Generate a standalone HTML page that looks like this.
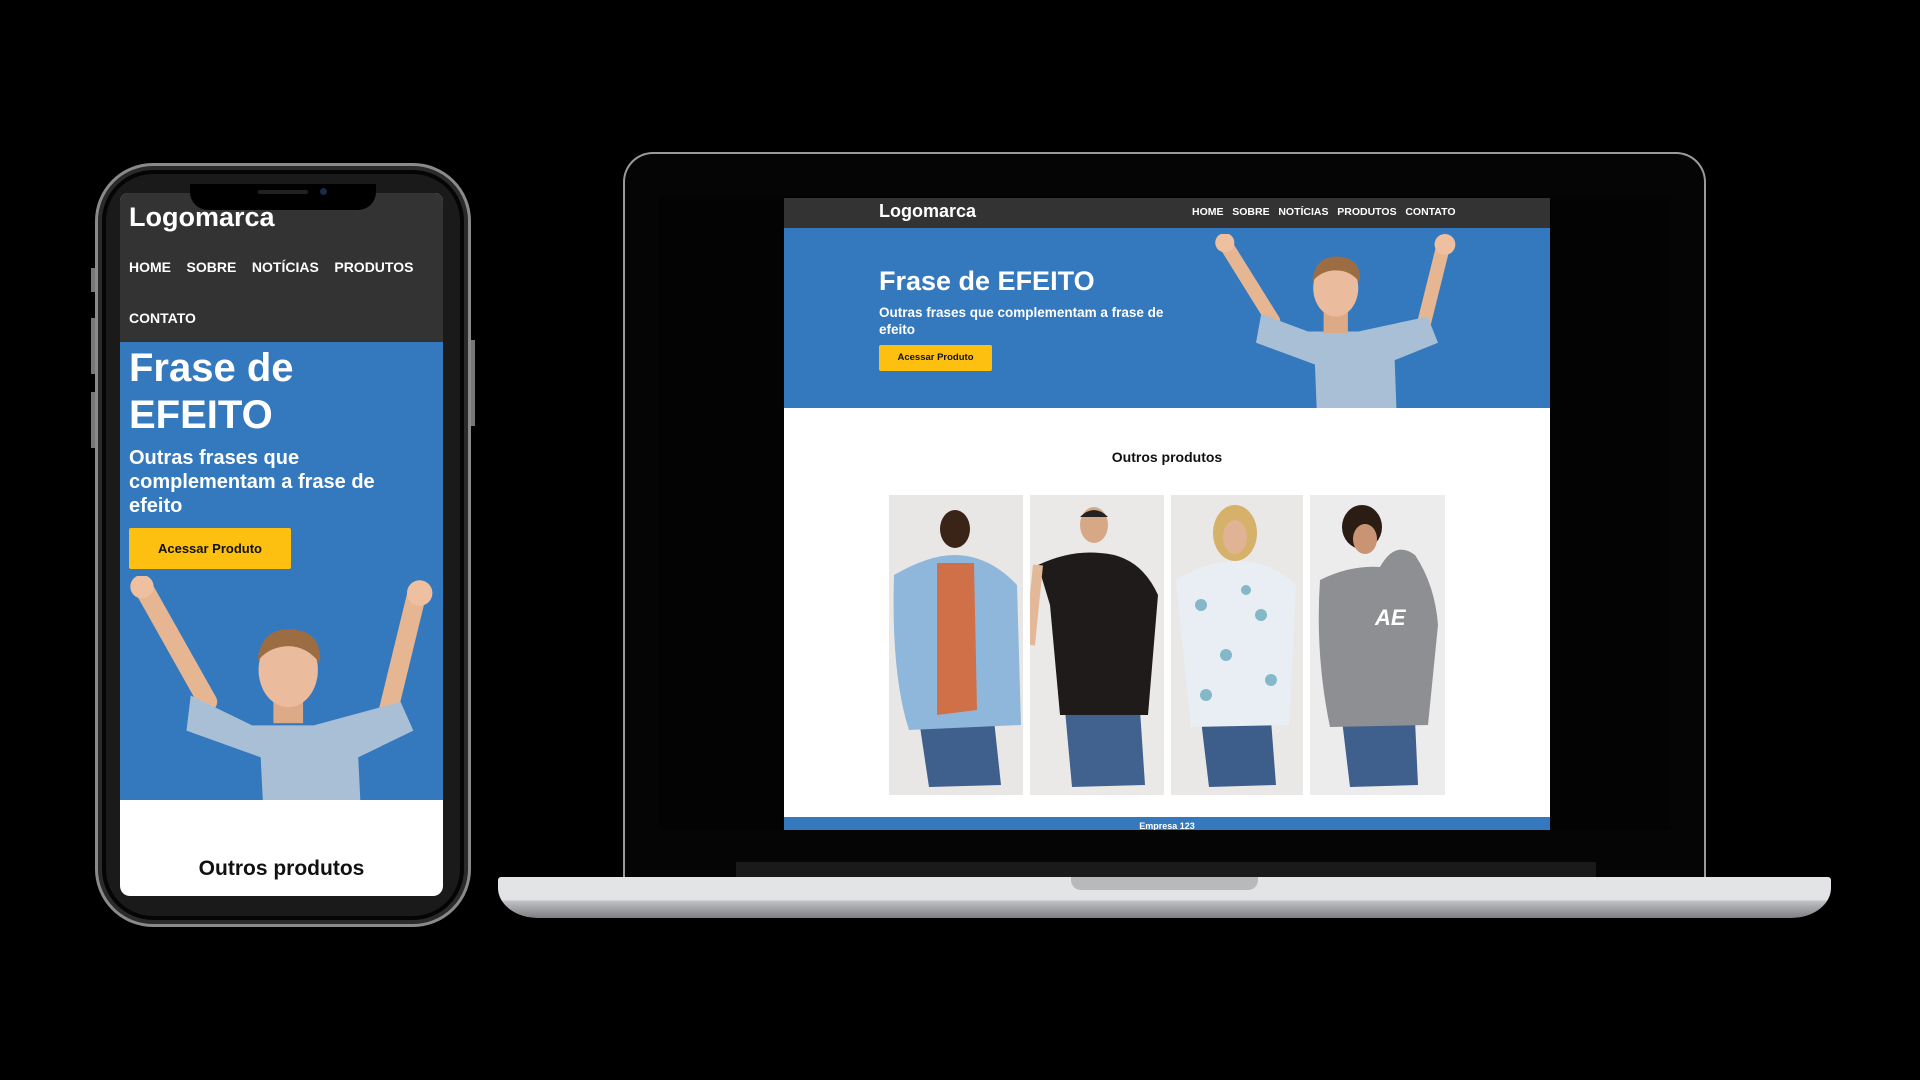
<!DOCTYPE html>
<html><head><meta charset="utf-8"><style>
*{margin:0;padding:0;box-sizing:border-box}
body{width:1920px;height:1080px;background:#000;position:relative;overflow:hidden;font-family:"Liberation Sans",Arial,sans-serif}
.abs{position:absolute}
.b{font-weight:bold}
</style></head><body>

<!-- PHONE -->
<div class="abs" style="left:95px;top:163px;width:376px;height:764px;border-radius:58px;background:#1a1a1a;border:3px solid #8a8a8a;box-shadow:inset 0 0 0 4px #2a2a2a,inset 0 0 0 8px #050505"></div>
<div class="abs" style="left:91px;top:268px;width:4px;height:24px;background:#777"></div>
<div class="abs" style="left:91px;top:318px;width:4px;height:56px;background:#777"></div>
<div class="abs" style="left:91px;top:392px;width:4px;height:56px;background:#777"></div>
<div class="abs" style="left:471px;top:340px;width:4px;height:86px;background:#777"></div>
<div class="abs" style="left:120px;top:193px;width:323px;height:703px;border-radius:8px 8px 10px 10px;overflow:hidden;background:#fff">
  <div class="abs" style="left:0;top:0;width:323px;height:149px;background:#333"></div>
  <div class="abs b" style="left:9px;top:9px;color:#fff;font-size:27px">Logomarca</div>
  <div class="abs b" style="left:9px;top:66px;color:#fff;font-size:14px;white-space:nowrap">HOME&nbsp;&nbsp;&nbsp;&nbsp;SOBRE&nbsp;&nbsp;&nbsp;&nbsp;NOTÍCIAS&nbsp;&nbsp;&nbsp;&nbsp;PRODUTOS</div>
  <div class="abs b" style="left:9px;top:117px;color:#fff;font-size:14px">CONTATO</div>
  <div class="abs" style="left:0;top:149px;width:323px;height:458px;background:#3479bd"></div>
  <div class="abs b" style="left:9px;top:152px;color:#fff;font-size:40px;line-height:47px">Frase de<br>EFEITO</div>
  <div class="abs b" style="left:9px;top:253px;color:#fff;font-size:20px;line-height:24px">Outras frases que<br>complementam a frase de<br>efeito</div>
  <div class="abs b" style="left:9px;top:335px;width:162px;height:41px;background:#fdc010;border-radius:2px;font-size:13px;color:#111;text-align:center;line-height:41px">Acessar Produto</div>
  <svg class="abs" style="left:5px;top:383px" width="318" height="224" viewBox="0 0 300 210" preserveAspectRatio="none">
    <path d="M18,12 L78,118" stroke="#e6b693" stroke-width="18" stroke-linecap="round"/>
    <path d="M275,18 L248,128" stroke="#e6b693" stroke-width="18" stroke-linecap="round"/>
    <circle cx="16" cy="10" r="11" fill="#eec0a0"/><circle cx="278" cy="16" r="12" fill="#eec0a0"/>
    <path d="M62,112 L120,140 L178,140 L260,118 L272,145 L220,170 L222,210 L130,210 L128,170 L58,145 Z" fill="#a9bfd6"/>
    <rect x="140" y="108" width="28" height="30" fill="#ddaa88"/>
    <ellipse cx="154" cy="88" rx="28" ry="35" fill="#eabb9c"/>
    <path d="M125,80 Q128,48 158,50 Q186,52 184,82 Q170,64 150,66 Q134,68 125,80Z" fill="#9c6c43"/>
  </svg>
  <div class="abs b" style="left:0;top:664px;width:323px;text-align:center;font-size:21px;color:#111">Outros produtos</div>
</div>
<div class="abs" style="left:190px;top:184px;width:186px;height:26px;background:#000;border-radius:0 0 18px 18px"></div>
<div class="abs" style="left:258px;top:190px;width:50px;height:4px;background:#222;border-radius:2px"></div>
<div class="abs" style="left:320px;top:188px;width:7px;height:7px;background:#1a2a4a;border-radius:50%"></div>

<!-- LAPTOP -->
<div class="abs" style="left:623px;top:152px;width:1083px;height:728px;border-radius:30px 30px 0 0;background:#050505;border:2px solid #9a9a9a;border-bottom:none"></div>
<div class="abs" style="left:659px;top:196px;width:1012px;height:634px;background:#030303"></div>
<div class="abs" style="left:784px;top:198px;width:766px;height:632px;background:#fff;overflow:hidden">
  <div class="abs" style="left:0;top:0;width:766px;height:30px;background:#333"></div>
  <div class="abs b" style="left:95px;top:3px;color:#fff;font-size:18px">Logomarca</div>
  <div class="abs b" style="left:408px;top:8px;color:#fff;font-size:10.5px;white-space:nowrap">HOME&nbsp;&nbsp;&nbsp;SOBRE&nbsp;&nbsp;&nbsp;NOTÍCIAS&nbsp;&nbsp;&nbsp;PRODUTOS&nbsp;&nbsp;&nbsp;CONTATO</div>
  <div class="abs" style="left:0;top:30px;width:766px;height:180px;background:#3479bd"></div>
  <div class="abs b" style="left:95px;top:68px;color:#fff;font-size:27px">Frase de EFEITO</div>
  <div class="abs b" style="left:95px;top:106px;color:#fff;font-size:13.5px;line-height:17px">Outras frases que complementam a frase de<br>efeito</div>
  <div class="abs b" style="left:95px;top:147px;width:113px;height:26px;background:#fdc010;border-radius:2px;font-size:9.5px;color:#111;text-align:center;line-height:26px">Acessar Produto</div>
  <svg class="abs" style="left:420px;top:36px" width="260" height="174" viewBox="0 0 300 200" preserveAspectRatio="none">
    <path d="M25,12 L80,100" stroke="#e6b693" stroke-width="16" stroke-linecap="round"/>
    <path d="M276,14 L252,110" stroke="#e6b693" stroke-width="16" stroke-linecap="round"/>
    <circle cx="24" cy="10" r="11" fill="#eec0a0"/><circle cx="278" cy="12" r="12" fill="#eec0a0"/>
    <path d="M66,92 L120,112 L178,112 L258,95 L270,125 L220,145 L222,200 L130,200 L128,150 L60,125 Z" fill="#a9bfd6"/>
    <rect x="138" y="82" width="28" height="32" fill="#ddaa88"/>
    <ellipse cx="152" cy="62" rx="26" ry="33" fill="#eabb9c"/>
    <path d="M125,55 Q128,24 156,26 Q182,28 180,56 Q168,40 148,42 Q133,44 125,55Z" fill="#9c6c43"/>
  </svg>
  <div class="abs b" style="left:0;top:251px;width:766px;text-align:center;font-size:14px;color:#111">Outros produtos</div>

  <!-- products -->
  <svg class="abs" style="left:105px;top:297px" width="134" height="300" viewBox="0 0 134 300">
    <rect width="134" height="300" fill="#e9e7e6"/>
    <path d="M30,225 L105,225 L112,290 L40,292 Z" fill="#3f5f8c"/>
    <path d="M5,80 Q40,60 65,60 Q100,60 128,90 L132,230 L20,235 Q2,180 5,80Z" fill="#8fb7dc"/>
    <path d="M48,68 L85,68 L88,215 L48,220Z" fill="#d07048"/>
    <ellipse cx="66" cy="34" rx="15" ry="19" fill="#3a2418"/>
  </svg>
  <svg class="abs" style="left:246px;top:297px" width="134" height="300" viewBox="0 0 134 300">
    <rect width="134" height="300" fill="#ebe8e8"/>
    <path d="M35,215 L110,215 L115,290 L42,292 Z" fill="#41618f"/>
    <path d="M8,70 Q40,55 70,58 Q110,60 128,100 L118,220 L30,220 L20,110 Z" fill="#1f1b1a"/>
    <path d="M8,70 L0,150" stroke="#e2b898" stroke-width="10"/>
    <ellipse cx="64" cy="30" rx="14" ry="18" fill="#d7a886"/>
    <path d="M50,22 Q64,8 78,22Z" fill="#222"/>
  </svg>
  <svg class="abs" style="left:387px;top:297px" width="132" height="300" viewBox="0 0 132 300">
    <rect width="132" height="300" fill="#eae8e7"/>
    <path d="M30,225 L100,225 L105,290 L38,292 Z" fill="#3d5d8a"/>
    <path d="M5,85 Q40,65 66,66 Q100,66 125,90 L118,230 L20,232 Z" fill="#e8eef3"/>
    <g fill="#5aa2b8" opacity=".7"><circle cx="30" cy="110" r="6"/><circle cx="90" cy="120" r="6"/><circle cx="55" cy="160" r="6"/><circle cx="100" cy="185" r="6"/><circle cx="35" cy="200" r="6"/><circle cx="75" cy="95" r="5"/></g>
    <ellipse cx="64" cy="38" rx="22" ry="28" fill="#d6b16a"/>
    <ellipse cx="64" cy="42" rx="12" ry="17" fill="#e0b394"/>
  </svg>
  <svg class="abs" style="left:526px;top:297px" width="135" height="300" viewBox="0 0 135 300">
    <rect width="135" height="300" fill="#edecec"/>
    <path d="M32,225 L105,225 L108,290 L40,292 Z" fill="#3f5f8c"/>
    <path d="M10,85 Q40,70 70,72 Q85,45 105,60 Q125,90 128,130 L118,230 L20,232 Q5,160 10,85Z" fill="#8e8f92"/>
    <text x="65" y="130" font-family="Liberation Sans" font-weight="bold" font-style="italic" font-size="22" fill="#fff">AE</text>
    <ellipse cx="52" cy="32" rx="20" ry="22" fill="#2b1c14"/>
    <ellipse cx="55" cy="44" rx="12" ry="15" fill="#c99474"/>
  </svg>

  <div class="abs" style="left:0;top:619px;width:766px;height:13px;background:#3479bd"></div>
  <div class="abs b" style="left:0;top:623px;width:766px;text-align:center;font-size:9px;color:#fff">Empresa 123</div>
</div>

<!-- base -->
<div class="abs" style="left:736px;top:862px;width:860px;height:16px;background:#1a1a1a"></div>
<div class="abs" style="left:498px;top:877px;width:1333px;height:41px;border-radius:3px 3px 40px 40px/3px 3px 30px 30px;background:linear-gradient(#e4e5e7 0,#e2e3e5 55%,#bdbec1 60%,#7e7f82 100%)"></div>
<div class="abs" style="left:1071px;top:877px;width:187px;height:13px;border-radius:0 0 10px 10px;background:#b8b9bb"></div>

</body></html>
